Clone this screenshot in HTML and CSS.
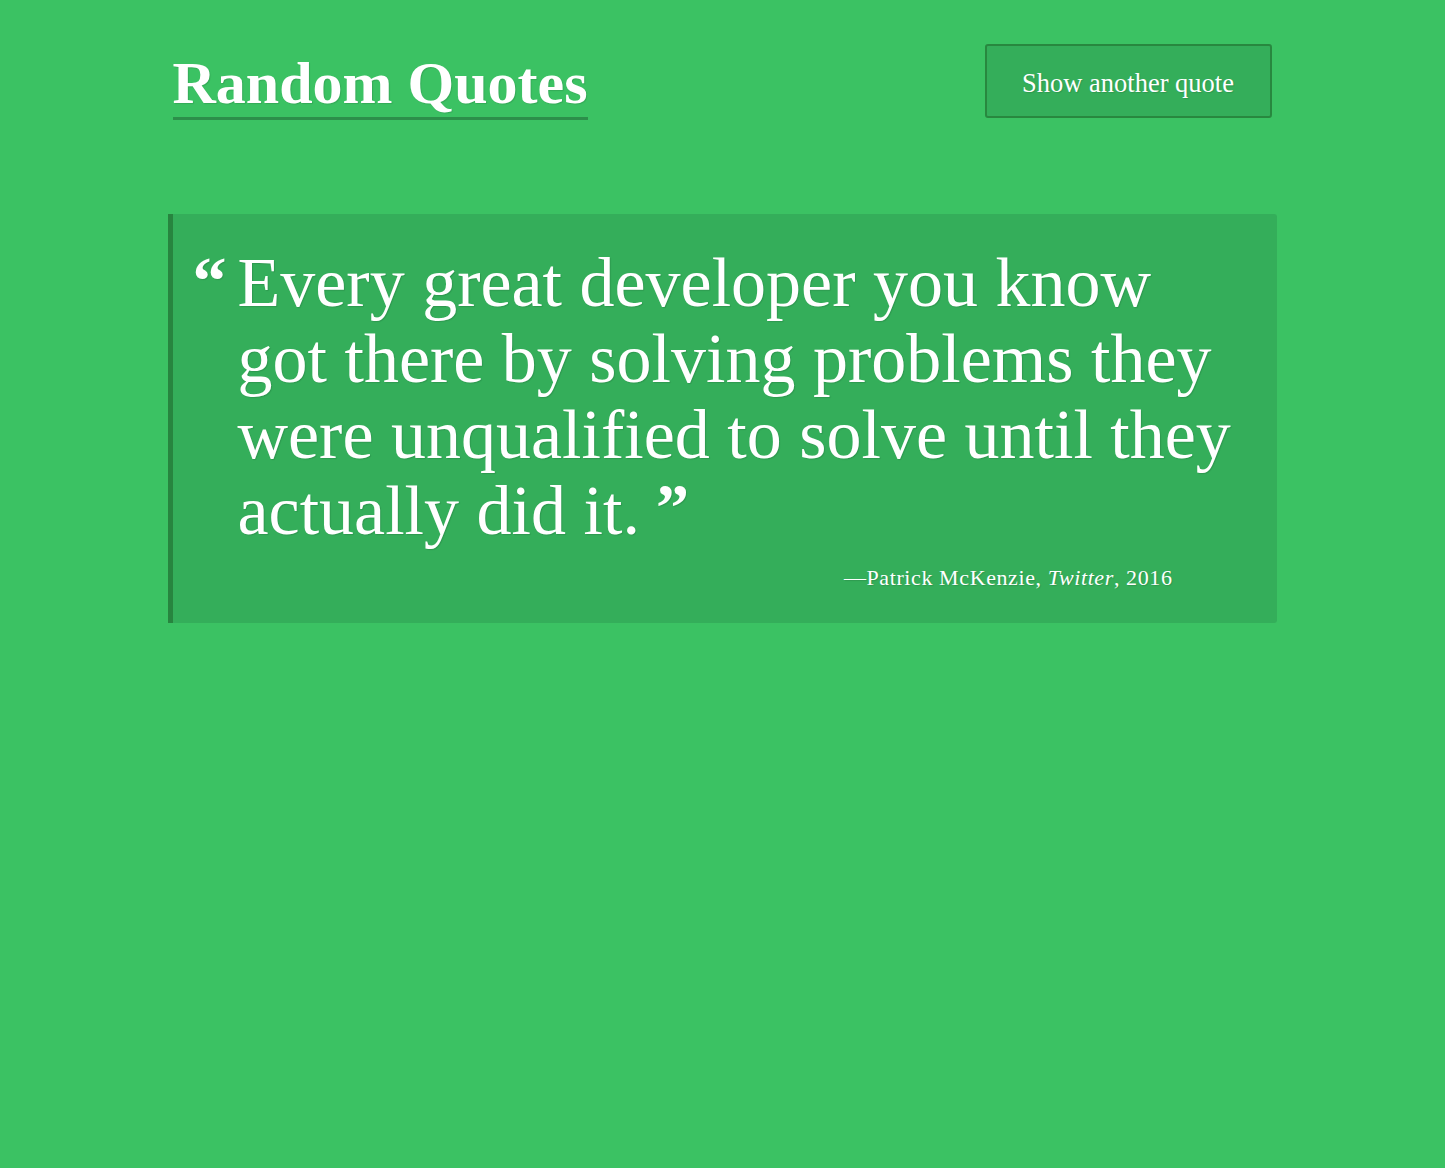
FILE: index.html
```html
<!DOCTYPE html>
<html lang="en">
<head>
<meta charset="utf-8">
<title>Random Quotes</title>
<link rel="stylesheet" href="styles.css">
</head>
<body>
<div class="page">
  <header class="header">
    <h1 class="title">Random Quotes</h1>
    <button class="btn" type="button">Show another quote</button>
  </header>
  <main>
    <blockquote class="quote">
      <span class="open-mark">&ldquo;</span>
      <div class="quote-body">
        <p class="quote-text">Every great developer you know got there by solving problems they were unqualified to solve until they actually did it.<span class="close-mark">&rdquo;</span></p>
        <p class="cite">&mdash;Patrick McKenzie, <em>Twitter</em>, 2016</p>
      </div>
    </blockquote>
  </main>
</div>
</body>
</html>
```

FILE: styles.css
```css
html, body {
  margin: 0;
  padding: 0;
  background: #3bc263;
  color: #ffffff;
  font-family: "Liberation Serif", "Times New Roman", serif;
  min-height: 100%;
}
.page {
  width: 1100px;
  margin: 0 auto;
  padding-top: 44px;
}
.header {
  display: flex;
  justify-content: space-between;
  align-items: flex-start;
}
.title {
  margin: 0;
  font-size: 60px;
  font-weight: 700;
  line-height: 68px;
  padding-top: 5px;
  border-bottom: 3px solid #2c8f4a;
  text-shadow: 1px 1px 1px rgba(0,0,0,0.12);
}
.btn {
  margin: 0 1px 0 0;
  width: 287px;
  height: 74px;
  background: #34ae5a;
  border: 2px solid #28883f;
  border-radius: 3px;
  color: #ffffff;
  font-family: "Liberation Serif", "Times New Roman", serif;
  font-size: 26.5px;
  padding: 4px 0 0;
  text-shadow: 1px 1px 1px rgba(0,0,0,0.12);
}
.quote {
  margin: 94px 0 0 -5px;
  width: 1109px;
  background: #34ae5a;
  border-left: 5px solid #27853f;
  border-radius: 0 3px 3px 0;
  display: flex;
  padding: 31px 24px 32px 20px;
  box-sizing: border-box;
}
.open-mark {
  font-size: 68px;
  font-weight: 700;
  line-height: 1;
  width: 45px;
  flex: none;
  padding-top: 2px;
  text-shadow: 1px 1px 1px rgba(0,0,0,0.12);
}
.quote-body {
  flex: 1;
}
.quote-text {
  margin: 0;
  font-size: 70px;
  line-height: 76px;
  text-shadow: 1px 1px 1px rgba(0,0,0,0.12);
}
.close-mark {
  font-weight: 700;
  font-size: 66px;
  margin-left: 16px;
  vertical-align: 5px;
  line-height: 0;
}
.cite {
  margin: 16px 80px 0 0;
  text-align: right;
  font-size: 22px;
  letter-spacing: 0.6px;
  text-shadow: 1px 1px 1px rgba(0,0,0,0.12);
}
.cite em {
  font-style: italic;
}
```
